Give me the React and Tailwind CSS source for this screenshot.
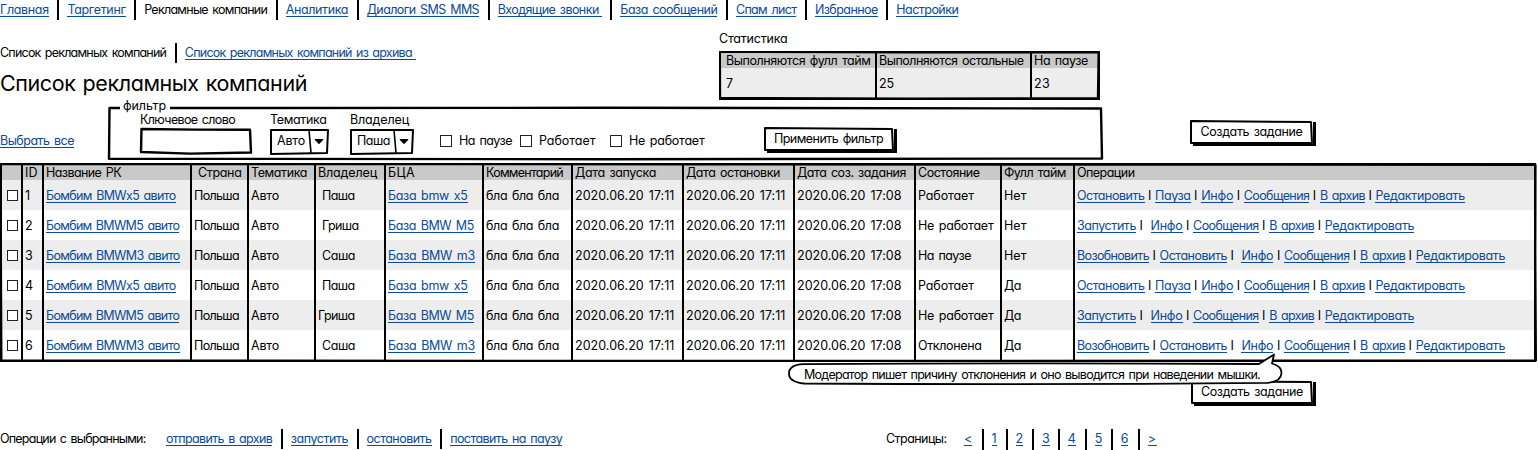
import { useLayoutEffect, useRef } from "react";

// Text fitted to a given width by spreading its letters.
function T({ w, link, pad = 0, className = "", children }) {
  const ref = useRef(null);
  useLayoutEffect(() => {
    const el = ref.current;
    el.style.letterSpacing = "0px";
    const natural = el.getBoundingClientRect().width;
    if (w) el.style.letterSpacing = `${(w - pad - natural) / el.textContent.length}px`;
  }, [w, pad, children]);
  return (
    <span
      className={`flex h-[17px] shrink-0 whitespace-pre border-b leading-[19px] ${
        link ? "border-[#0b4a94] text-[#0b4a94]" : "border-transparent"
      } ${className}`}
      style={w ? { width: w } : undefined}
    >
      <span ref={ref} className="shrink-0">
        {children}
      </span>
    </span>
  );
}

// Hand-drawn rectangle outline.
function Frame({ w, h, points, sw = 2 }) {
  return (
    <svg className="pointer-events-none absolute top-0 left-0 overflow-visible" width={w} height={h}>
      <polygon points={points} fill="none" stroke="#000" strokeWidth={sw} strokeLinejoin="round" />
    </svg>
  );
}

function Divided({ items }) {
  return (
    <div className="flex h-5">
      {items.map(([text, w, plain, pad], i) => (
        <div key={text} className={`flex shrink-0 pr-[8.6px] ${i ? "border-l-2 border-black pl-2" : ""}`}>
          <T w={w} link={!plain} pad={pad}>
            {text}
          </T>
        </div>
      ))}
    </div>
  );
}

function Button({ w, tw, children, className = "" }) {
  return (
    <div className={`relative h-6 shrink-0 bg-white shadow-[3px_2px_0_#000] ${className}`} style={{ width: w }}>
      <Frame w={w} h={24} points={`1,1 ${w - 2},2 ${w - 1},23 1,23`} />
      <div className="flex justify-center pt-[2px]">
        <T w={tw}>{children}</T>
      </div>
    </div>
  );
}

function Select({ label, lw, value, vw, w, split }) {
  return (
    <div className="shrink-0" style={{ width: w }}>
      <T w={lw}>{label}</T>
      <div className="relative mt-[2px] flex h-[26px] pt-[2px] pl-[7px]">
        <Frame w={w} h={26} points={`1,1 ${w - 1},1 ${w - 2},24 1,25`} />
        <svg className="pointer-events-none absolute top-0 left-0 overflow-visible" width={w} height="26">
          <path d={`M${split - 1} 1L${split + 1} 24`} stroke="#000" strokeWidth="1.6" />
          <path d={`M${split + 5} 10.5h8l-4 4.200z`} fill="#000" stroke="#000" strokeLinejoin="round" />
        </svg>
        <T w={vw}>{value}</T>
      </div>
    </div>
  );
}

function Check({ label, w, className = "" }) {
  return (
    <div className={`flex shrink-0 items-start ${className}`}>
      <span className="mt-[4px] mr-[7px] size-3 border border-[#222] bg-white" />
      <T w={w}>{label}</T>
    </div>
  );
}

const nav = [
  ["Главная", 48.8],
  ["Таргетинг", 58.2],
  ["Рекламные компании", 123, true],
  ["Аналитика", 62.3],
  ["Диалоги SMS MMS", 112.4],
  ["Входящие звонки", 104.1, false, 3],
  ["База сообщений", 97],
  ["Спам лист", 60.4],
  ["Избранное", 62.8],
  ["Настройки", 62],
];

const head = [
  ["", 0],
  ["ID", 12.5],
  ["Название РК", 75],
  ["Страна", 43.5],
  ["Тематика", 56],
  ["Владелец", 59],
  ["БЦА", 27],
  ["Комментарий", 77],
  ["Дата запуска", 81],
  ["Дата остановки", 94],
  ["Дата соз. задания", 109],
  ["Состояние", 61.5],
  ["Фулл тайм", 62],
  ["Операции", 57.5],
];

const cols =
  "grid grid-cols-[19px_21px_148px_57px_67px_70px_98px_89px_111px_111px_121px_86px_73px_1fr]";

const campaign = { x5: ["Бомбим BMWx5 авито", 129.5], M5: ["Бомбим BMWM5 авито", 133.3], m3: ["Бомбим BMWM3 авито", 133.7] };
const base = { x5: ["База bmw x5", 79.5], M5: ["База BMW M5", 86], m3: ["База BMW m3", 87] };
const states = { "Работает": 56, "Не работает": 75.5, "На паузе": 53, "Отклонена": 63.5 };
const owners = { "Паша": 32.5, "Гриша": 36.5, "Саша": 33 };

const tail = [
  ["Инфо", 32],
  ["Сообщения", 65.5],
  ["В архив", 45],
  ["Редактировать", 89.5],
];
const ops = {
  run: [["Остановить", 67.5], ["Пауза", 35.5], ...tail],
  stop: [["Запустить", 59, 14.5], ...tail],
  pause: [["Возобновить", 72], ["Остановить", 67.3, 14.5], ...tail],
};

const rows = [
  ["1", "x5", "Паша", "Работает", "Нет", "run"],
  ["2", "M5", "Гриша", "Не работает", "Нет", "stop"],
  ["3", "m3", "Саша", "На паузе", "Нет", "pause"],
  ["4", "x5", "Паша", "Работает", "Да", "run"],
  ["5", "M5", "Гриша", "Не работает", "Да", "stop"],
  ["6", "m3", "Саша", "Отклонена", "Да", "pause"],
];

const cell = "flex min-w-0 border-l-2 border-black pt-[6px] pl-[2px]";

function Ops({ list }) {
  return list.map(([text, w, gap = 10.6], i) => (
    <div key={text} className="flex shrink-0">
      <T w={w} link>
        {text}
      </T>
      {i < list.length - 1 && (
        <span className="h-4 shrink-0 pl-[3.5px] leading-[19px]" style={{ width: gap }}>
          I
        </span>
      )}
    </div>
  ));
}

function CampaignTable() {
  return (
    <div className="relative h-[199px] w-[1536px] border-2 border-black">
      <div className={`${cols} h-[15px] bg-[#c9c9c9]`}>
        {head.map(([text, w], i) => (
          <div key={i} className={`flex min-w-0 ${i ? "border-l-2 border-black pl-[2px]" : ""}`}>
            <T w={w} className={`-mt-[2px] ${i === 3 ? "ml-[4px]" : ""}`}>
              {text}
            </T>
          </div>
        ))}
      </div>
      {rows.map(([id, car, owner, state, full, op], i) => (
        <div key={id} className={`${cols} h-[30px] ${i % 2 ? "bg-white" : "bg-[#ededed]"}`}>
          <div className="flex pt-[10px] pl-[5px]">
            <span className="size-[11px] border border-[#222] bg-white" />
          </div>
          <div className={cell}>
            <T w={id === "1" ? 5 : 7.5}>{id}</T>
          </div>
          <div className={cell}>
            <T w={campaign[car][1]} link>
              {campaign[car][0]}
            </T>
          </div>
          <div className={cell}>
            <T w={45}>Польша</T>
          </div>
          <div className={cell}>
            <T w={28}>Авто</T>
          </div>
          <div className={cell}>
            <T w={owners[owner]} className={id === "5" ? "" : "ml-[4px]"}>
              {owner}
            </T>
          </div>
          <div className={cell}>
            <T w={base[car][1]} link>
              {base[car][0]}
            </T>
          </div>
          <div className={cell}>
            <T w={73}>бла бла бла</T>
          </div>
          <div className={cell}>
            <T w={99.5}>2020.06.20 17:11</T>
          </div>
          <div className={cell}>
            <T w={99.5}>2020.06.20 17:11</T>
          </div>
          <div className={cell}>
            <T w={104.5}>2020.06.20 17:08</T>
          </div>
          <div className={cell}>
            <T w={states[state]}>{state}</T>
          </div>
          <div className={cell}>
            <T w={full === "Да" ? 17 : 22.5}>{full}</T>
          </div>
          <div className={cell}>
            <Ops list={ops[op]} />
          </div>
        </div>
      ))}
      <Frame w={1536} h={199} points="-1,-1 700,-0.6 1533.6,0 1533.4,90 1534,195.4 700,195.8 -0.5,195.4 -1,90" />
    </div>
  );
}

const stats = [
  ["Выполняются фулл тайм", 144.5, "7", 6.5],
  ["Выполняются остальные", 144.5, "25", 15],
  ["На паузе", 54, "23", 16],
];

function Stats() {
  return (
    <div>
      <T w={68.5}>Статистика</T>
      <div className="relative mt-[5px] grid h-[49px] w-[381px] grid-cols-[154px_155px_1fr] border-2 border-black bg-[#ededed]">
        {stats.map(([title, w, value, vw], i) => (
          <div key={title} className={`min-w-0 ${i ? "border-l-2 border-black" : ""}`}>
            <div className={`flex h-[15px] bg-[#c9c9c9] ${i ? "pl-[2px]" : "pl-[5px]"}`}>
              <T w={w} className="-mt-[2px]">
                {title}
              </T>
            </div>
            <div className={`pt-[6px] ${i ? "pl-[2px]" : "pl-[5px]"}`}>
              <T w={vw}>{value}</T>
            </div>
          </div>
        ))}
        <Frame w={381} h={49} points="-1,-1 190,-0.5 377.5,-0.5 376.8,45.2 190,45.5 -0.8,45" />
      </div>
    </div>
  );
}

function Filter() {
  return (
    <div className="relative flex h-[54px] w-[994px] shrink-0">
      <svg className="pointer-events-none absolute top-0 left-0 overflow-visible" width="994" height="54">
        <path
          d="M12 1H1.5L1 51.7L500 52.2L994 51.5L993 1.5L500 0.8L62 1"
          fill="none"
          stroke="#000"
          strokeWidth="2.4"
          strokeLinejoin="round"
        />
      </svg>
      <T w={43} className="absolute -top-[11px] left-[15px]">
        фильтр
      </T>
      <div className="ml-[32px] w-[112px] shrink-0 pt-[3px]">
        <T w={95}>Ключевое слово</T>
        <div className="relative mt-px h-[26px]">
          <Frame w={112} h={26} sw={2.4} points="1.5,1 56,1.6 110,1.8 111,24.5 50,25.6 1,24" />
        </div>
      </div>
      <div className="ml-[18px] flex pt-[3px]">
        <Select label="Тематика" lw={56.5} value="Авто" vw={28} w={59} split={40} />
      </div>
      <div className="ml-[21px] flex pt-[3px]">
        <Select label="Владелец" lw={59} value="Паша" vw={33} w={64} split={45} />
      </div>
      <div className="ml-[26px] flex pt-[24px]">
        <Check label="На паузе" w={53} />
        <Check label="Работает" w={56.5} className="ml-[8px]" />
        <Check label="Не работает" w={75.5} className="ml-[14.5px]" />
      </div>
      <Button w={130} tw={109} className="mt-5 ml-[59px]">
        Применить фильтр
      </Button>
    </div>
  );
}

const pages = [
  ["<", 8, 9.5],
  ["1", 5, 9],
  ["2", 7.5, 9],
  ["3", 7.5, 8.3],
  ["4", 8.5, 8.5],
  ["5", 7.5, 8.5],
  ["6", 7.5, 9.4],
  [">", 9, 0],
];

export default function App() {
  return (
    <div className="relative flex h-[450px] w-[1538px] flex-col overflow-hidden bg-white font-['Inter','Noto_Sans',sans-serif] text-[12.5px] text-black [font-feature-settings:'cv11'] [word-spacing:1.5px]">
      <Divided items={nav} />

      <div className="flex h-[87px]">
        <div className="w-[719px] shrink-0 pt-[23px]">
          <Divided
            items={[
              ["Список рекламных компаний", 166.2, true],
              ["Список рекламных компаний из архива", 231, false, 4],
            ]}
          />
          <T w={307} className="mt-[7px] text-[21.5px] h-[28px] leading-[26px]">
            Список рекламных компаний
          </T>
        </div>
        <div className="pt-[9px]">
          <Stats />
        </div>
      </div>

      <div className="flex h-[56px]">
        <div className="w-[108px] shrink-0 pt-6">
          <T w={74} link>
            Выбрать все
          </T>
        </div>
        <Filter />
        <Button w={123} tw={102} className="mt-[13px] ml-[88px]">
          Создать задание
        </Button>
      </div>

      <CampaignTable />

      <div className="h-[67px] pt-[17.5px] pl-[1191px]">
        <Button w={122} tw={102}>
          Создать задание
        </Button>
      </div>

      <div className="flex h-[21px]">
        <T w={145.5}>Операции с выбранными:</T>
        <div className="ml-[20.5px] w-[720px] shrink-0">
          <Divided
            items={[
              ["отправить в архив", 106.2],
              ["запустить", 57.2],
              ["остановить", 65],
              ["поставить на паузу", 112],
            ]}
          />
        </div>
        <T w={60.5}>Страницы:</T>
        <div className="ml-[17.5px] flex">
          {pages.map(([text, w, gap], i) => (
            <div key={text} className={`flex shrink-0 ${i ? "border-l-2 border-black pl-2" : ""}`} style={{ paddingRight: gap }}>
              <T w={w} link>
                {text}
              </T>
            </div>
          ))}
        </div>
      </div>

      <div className="absolute top-[353px] left-[787px] h-8 w-[497px]">
        <svg className="absolute top-0 left-0" width="497" height="33" viewBox="0 0 497 33">
          <path
            d="M16 11.2Q240 9.6 472 11L487 1.5L485 10.5Q494.5 13 494.5 20Q494 29 480 29.8Q250 32 17 30.5Q2 29 2 20.5Q2 12 16 11.2Z"
            fill="#fff"
            stroke="#000"
            strokeWidth="1.8"
            strokeLinejoin="round"
          />
        </svg>
        <div className="relative pt-[12px] pl-[17px]">
          <T w={456}>Модератор пишет причину отклонения и оно выводится при наведении мышки.</T>
        </div>
      </div>
    </div>
  );
}
